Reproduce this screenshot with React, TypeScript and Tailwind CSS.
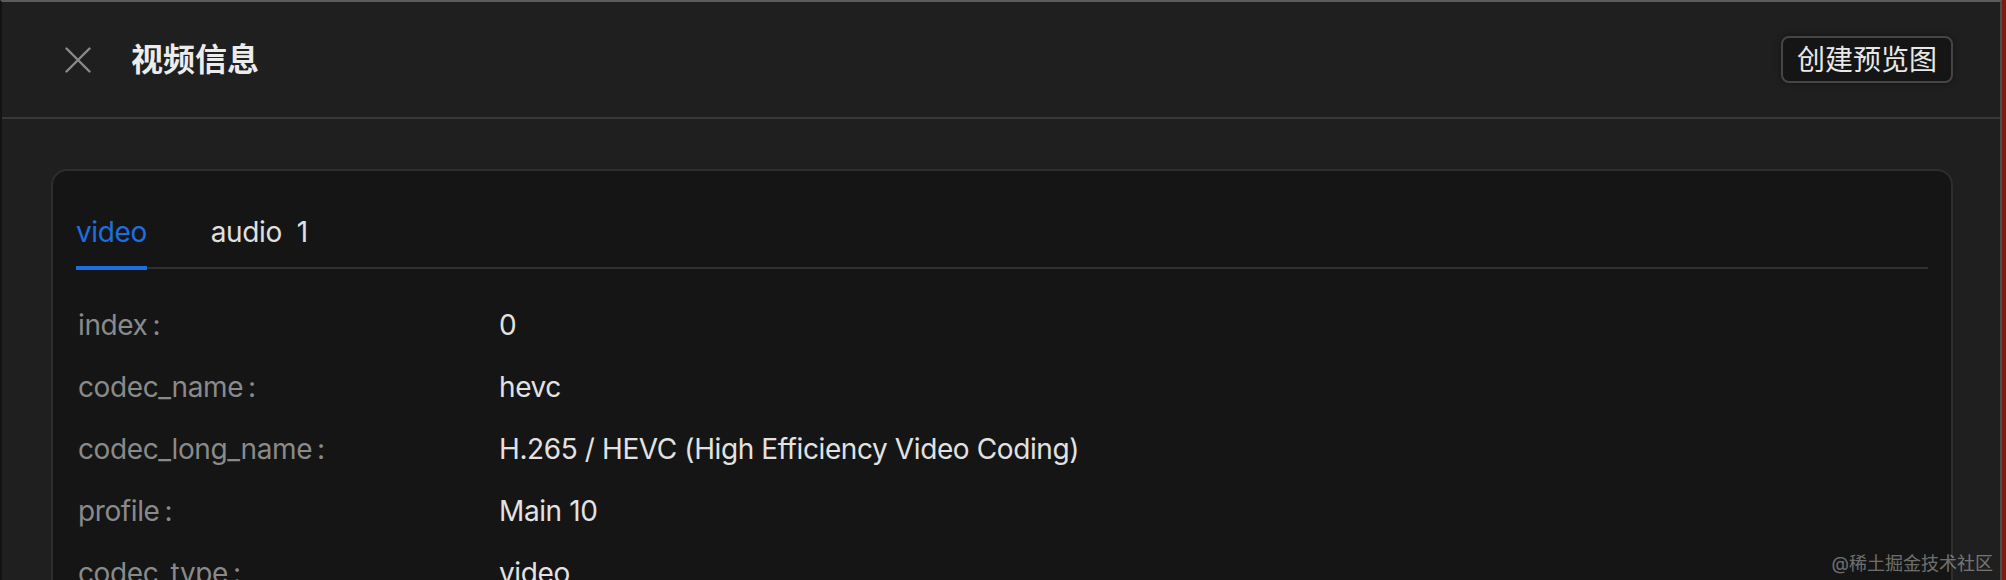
import React, { useState } from 'react';

const FONT = "font-['Inter','Noto_Sans_CJK_SC',sans-serif]";

const streamRows: [string, string][] = [
  ['index', '0'],
  ['codec_name', 'hevc'],
  ['codec_long_name', 'H.265 / HEVC (High Efficiency Video Coding)'],
  ['profile', 'Main 10'],
  ['codec_type', 'video'],
  ['codec_tag_string', 'hvc1'],
  ['codec_tag', '0x31637668'],
  ['width', '3840'],
  ['height', '2160'],
];

const CloseIcon = () => (
  <svg width="26" height="26" viewBox="0 0 26 26" fill="none">
    <path d="M1.5 1.5L24.5 24.5M24.5 1.5L1.5 24.5" stroke="#8a8a8a" strokeWidth="2.4" strokeLinecap="round" />
  </svg>
);

export default function App() {
  const [tab, setTab] = useState<'video' | 'audio'>('video');

  return (
    <div className={`relative h-[580px] w-[2006px] overflow-hidden border-r-4 border-r-[#7a1c10] ${FONT}`}>
      <div className="flex h-full flex-col overflow-hidden border-t-2 border-l-2 border-r-2 border-t-[#5c5c5c] border-l-[#131313] border-r-[#4d4d4d] bg-[#1f1f1f]">
        {/* Header */}
        <div className="flex h-[117px] shrink-0 items-center border-b-2 border-[#383838] pl-[63px] pr-[47px]">
          <button className="flex h-[26px] w-[26px] items-center justify-center">
            <CloseIcon />
          </button>
          <h1 className="ml-[40px] text-[32px] font-bold leading-none text-[#ececec]">视频信息</h1>
          <div className="flex-1" />
          <button className="h-[47px] rounded-[8px] border-2 border-[#454545] bg-[#151515] px-[14px] text-[28px] leading-none text-[#e8e8e8] shadow-[0_0_6px_rgba(0,0,0,0.4)]">
            创建预览图
          </button>
        </div>

        {/* Body */}
        <div className="flex-1 pl-[49px] pr-[47px] pt-[50px]">
          <div className="rounded-[16px] border-2 border-[#2e2e2e] bg-[#151515] px-[23px] pt-[39px] tracking-[-0.4px]">
            {/* Tabs */}
            <div className="flex gap-[64px] border-b-2 border-[#303030]">
              <button
                onClick={() => setTab('video')}
                className={`relative box-content h-[44px] pb-[13px] text-[28px] leading-[44px] ${tab === 'video' ? 'text-[#1d6fe0]' : 'text-[#e0e0e0]'}`}
              >
                video
                {tab === 'video' && <span className="absolute -bottom-[3px] left-0 right-0 h-[4px] bg-[#1d6fe0]" />}
              </button>
              <button
                onClick={() => setTab('audio')}
                className={`relative box-content h-[44px] pb-[13px] text-[28px] leading-[44px] ${tab === 'audio' ? 'text-[#1d6fe0]' : 'text-[#e0e0e0]'}`}
              >
                audio<span className="ml-[15px]">1</span>
                {tab === 'audio' && <span className="absolute -bottom-[3px] left-0 right-0 h-[4px] bg-[#1d6fe0]" />}
              </button>
            </div>

            {/* Stream info */}
            <div className="mt-[25px] flex flex-col">
              {streamRows.map(([k, v]) => (
                <div key={k} className="flex h-[62px] items-center text-[28px] leading-[62px]">
                  <div className="w-[423px] shrink-0 pl-[2px] text-[#8a8a8a]">
                    {k}
                    <span className="ml-[5px]">:</span>
                  </div>
                  <div className="text-[#e2e2e2]">{v}</div>
                </div>
              ))}
            </div>
          </div>
        </div>
      </div>

      {/* watermark */}
      <div className="pointer-events-none absolute bottom-[7px] right-[9px] text-[18px] leading-none text-white/40">
        @稀土掘金技术社区
      </div>
    </div>
  );
}
